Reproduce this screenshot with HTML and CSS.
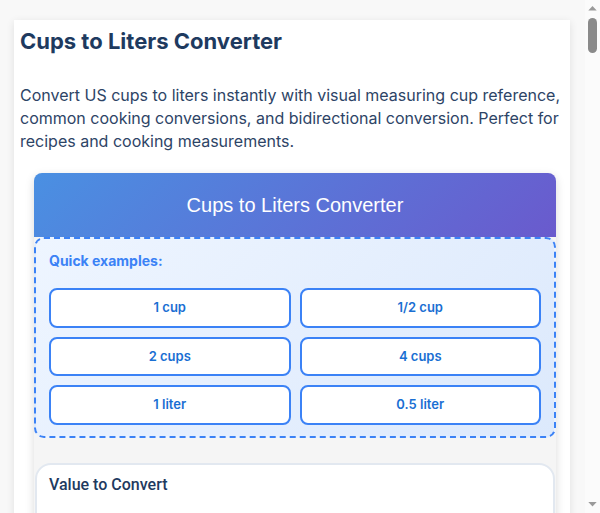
FILE: index.html
```html
<!DOCTYPE html>
<html lang="en">
<head>
    <meta charset="UTF-8">
    <meta name="viewport" content="width=device-width, initial-scale=1.0">
    <title>Cups to Liters Converter</title>
    <link rel="stylesheet" href="styles.css">
</head>
<body>
    <main class="page">
        <article class="article">
            <h1 class="article-title">Cups to Liters Converter</h1>
            <p class="article-intro">Convert US cups to liters instantly with visual measuring cup reference, common cooking conversions, and bidirectional conversion. Perfect for recipes and cooking measurements.</p>

            <div class="converter">
                <div class="converter-header">Cups to Liters Converter</div>
                <div class="converter-body">
                    <div class="quick-examples">
                        <div class="quick-label">Quick examples:</div>
                        <div class="quick-grid">
                            <button class="quick-button">1 cup</button>
                            <button class="quick-button">1/2 cup</button>
                            <button class="quick-button">2 cups</button>
                            <button class="quick-button">4 cups</button>
                            <button class="quick-button">1 liter</button>
                            <button class="quick-button">0.5 liter</button>
                        </div>
                    </div>

                    <div class="input-card">
                        <h3 class="input-title">Value to Convert</h3>
                        <input class="input-field" type="number" value="1">
                        <select class="input-field">
                            <option>US cups</option>
                            <option>Liters</option>
                        </select>
                    </div>

                    <div class="input-card">
                        <h3 class="input-title">Result</h3>
                        <div class="result-value">1 cup = 0.2366 liters</div>
                    </div>
                </div>
            </div>

            <h2 class="section-title">Common conversions</h2>
            <ul class="section-list">
                <li>1/4 cup = 0.059 L</li>
                <li>1/3 cup = 0.079 L</li>
                <li>1/2 cup = 0.118 L</li>
                <li>1 cup = 0.237 L</li>
                <li>2 cups = 0.473 L</li>
                <li>4 cups = 0.946 L</li>
            </ul>
        </article>
    </main>

    <!-- window scrollbar -->
    <aside class="scrollbar">
        <svg class="scroll-arrow" width="15" height="15" viewBox="0 0 15 15"><path d="M3.3 10.5 L11.7 10.5 L7.5 6 Z" fill="#9a9a9a"/></svg>
        <div class="scroll-thumb"></div>
        <div class="scroll-track"></div>
        <svg class="scroll-arrow" width="15" height="15" viewBox="0 0 15 15"><path d="M3.3 4 L11.7 4 L7.5 8.5 Z" fill="#9a9a9a"/></svg>
    </aside>
</body>
</html>
```

FILE: styles.css
```css
body, html {
    margin: 0;
    padding: 0;
    height: 100%;
    overflow: hidden;
    background: #f8f8f8;
    font-family: Inter, "Noto Sans", sans-serif;
}
body {
    display: flex;
}
.page {
    flex: 1;
    min-width: 0;
    height: 100%;
    box-sizing: border-box;
    overflow: hidden;
    padding: 20px 15px 40px 14px;
}
.scrollbar {
    width: 15px;
    flex-shrink: 0;
    height: 100%;
    display: flex;
    flex-direction: column;
    align-items: center;
    background: #fbfbfb;
}
.scroll-arrow {
    display: block;
    flex-shrink: 0;
}
.scroll-thumb {
    width: 9px;
    height: 35px;
    margin-top: 3px;
    border-radius: 5px;
    background: #8a8a8a;
}
.scroll-track {
    flex: 1;
}
.article {
    background: white;
    padding: 8px 6px 24px;
    box-shadow: 0 2px 8px rgba(0, 0, 0, 0.1);
}
.article-title {
    font-size: 22px;
    font-weight: 700;
    color: #1e3a5f;
    margin: 0 0 30px;
}
.article-intro {
    font-size: 16px;
    line-height: 23px;
    color: #2d4466;
    margin: 0 0 20px;
}
.converter {
    width: 522px;
    margin-left: 14px;
    border-radius: 8px;
    overflow: hidden;
    box-shadow: 0 3px 10px rgba(0, 0, 0, 0.15);
    background: #f5f5f5;
}
.converter-header {
    background: linear-gradient(135deg, #4a90e2 0%, #6a5acd 100%);
    color: white;
    font-family: "Liberation Sans", Arial, sans-serif;
    font-size: 20px;
    line-height: 24px;
    padding: 20px;
    text-align: center;
}
.converter-body {
    padding-bottom: 20px;
}
.quick-examples {
    background: linear-gradient(135deg, #eef5ff 0%, #dce9fc 100%);
    border: 2px dashed #3b82f6;
    border-radius: 10px;
    padding: 13px 13px 11px;
}
.quick-label {
    font-size: 14px;
    font-weight: 700;
    color: #3b82f6;
    line-height: 17px;
    margin-bottom: 19px;
}
.quick-grid {
    display: grid;
    grid-template-columns: 1fr 1fr;
    gap: 9px;
}
.quick-button {
    background: white;
    border: 2px solid #3b82f6;
    border-radius: 8px;
    padding: 10px 8px;
    font-family: Inter, sans-serif;
    font-size: 13px;
    line-height: 15.6px;
    font-weight: 600;
    color: #1a6fd3;
    cursor: pointer;
}
.input-card {
    background: white;
    border: 2px solid #e2e8f0;
    border-radius: 16px;
    margin: 25px 1px 0;
    padding: 10px 12px 16px;
}
.input-title {
    font-family: Roboto, sans-serif;
    font-size: 16px;
    font-weight: 500;
    color: #1e3a5f;
    margin: 0 0 22px;
}
.input-field {
    display: block;
    width: 100%;
    box-sizing: border-box;
    padding: 10px;
    margin-bottom: 10px;
    border: 1px solid #cbd5e0;
    border-radius: 6px;
    font-size: 16px;
}
.result-value {
    font-size: 18px;
    font-weight: 700;
    color: #1a6fd3;
}
.section-title {
    font-size: 18px;
    color: #1e3a5f;
    margin: 30px 0 12px;
}
.section-list {
    color: #2d4466;
    line-height: 1.6;
    margin: 0;
}
```
